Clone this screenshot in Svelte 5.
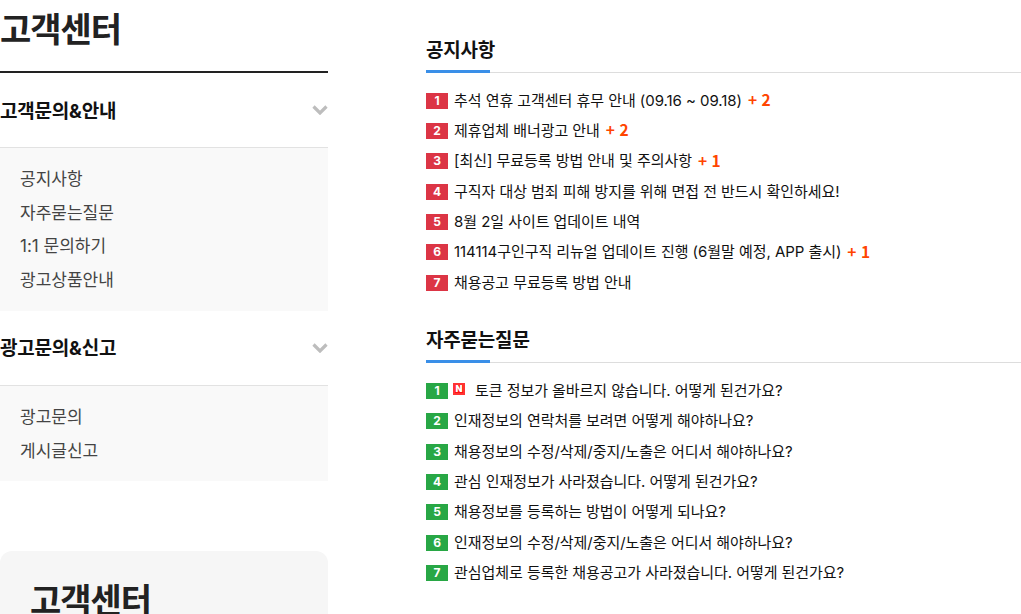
<script>
  const notices = [
    { text: '추석 연휴 고객센터 휴무 안내 (09.16 ~ 09.18)', plus: 2 },
    { text: '제휴업체 배너광고 안내', plus: 2 },
    { text: '[최신] 무료등록 방법 안내 및 주의사항', plus: 1 },
    { text: '구직자 대상 범죄 피해 방지를 위해 면접 전 반드시 확인하세요!' },
    { text: '8월 2일 사이트 업데이트 내역' },
    { text: '114114구인구직 리뉴얼 업데이트 진행 (6월말 예정, APP 출시)', plus: 1 },
    { text: '채용공고 무료등록 방법 안내' }
  ];
  const faqs = [
    { text: '토큰 정보가 올바르지 않습니다. 어떻게 된건가요?', isNew: true },
    { text: '인재정보의 연락처를 보려면 어떻게 해야하나요?' },
    { text: '채용정보의 수정/삭제/중지/노출은 어디서 해야하나요?' },
    { text: '관심 인재정보가 사라졌습니다. 어떻게 된건가요?' },
    { text: '채용정보를 등록하는 방법이 어떻게 되나요?' },
    { text: '인재정보의 수정/삭제/중지/노출은 어디서 해야하나요?' },
    { text: '관심업체로 등록한 채용공고가 사라졌습니다. 어떻게 된건가요?' }
  ];
  const menus = [
    { title: '고객문의&안내', items: ['공지사항', '자주묻는질문', '1:1 문의하기', '광고상품안내'] },
    { title: '광고문의&신고', items: ['광고문의', '게시글신고'] }
  ];
</script>

<div class="page">
  <aside class="side">
    <h1 class="side-title">고객센터</h1>
    {#each menus as m}
      <div class="menu-head">
        <span>{m.title}</span>
        <svg class="chev" width="16" height="10" viewBox="0 0 16 10">
          <path d="M1.5 1.5 L8 8 L14.5 1.5" fill="none" stroke="#bdbdbd" stroke-width="3.2" />
        </svg>
      </div>
      <ul class="menu-list">
        {#each m.items as item}
          <li>{item}</li>
        {/each}
      </ul>
    {/each}
    <div class="side-card">
      <h2>고객센터</h2>
    </div>
  </aside>

  <main class="content">
    <section class="board">
      <h3 class="board-title">공지사항</h3>
      <ul class="rows">
        {#each notices as n, i}
          <li>
            <span class="num red">{i + 1}</span>
            <span>{n.text}</span>
            {#if n.plus}<b class="plus">+ {n.plus}</b>{/if}
          </li>
        {/each}
      </ul>
    </section>
    <section class="board">
      <h3 class="board-title">자주묻는질문</h3>
      <ul class="rows">
        {#each faqs as f, i}
          <li>
            <span class="num green">{i + 1}</span>
            {#if f.isNew}<span class="new">N</span>{/if}
            <span>{f.text}</span>
          </li>
        {/each}
      </ul>
    </section>
  </main>
</div>

<style>
  :global(body) {
    margin: 0;
    background: #fff;
  }
  .page {
    display: flex;
    height: 614px;
    overflow: hidden;
    font-family: Inter, "Noto Sans CJK KR", sans-serif;
    color: #222;
  }
  ul {
    list-style: none;
    margin: 0;
    padding: 0;
  }
  .side {
    width: 328px;
    flex: none;
  }
  .side-title {
    margin: 0;
    height: 71px;
    border-bottom: 2px solid #222;
    font-size: 34px;
    font-weight: 700;
    line-height: 60px;
    letter-spacing: -1px;
    color: #222;
  }
  .menu-head {
    display: flex;
    justify-content: space-between;
    align-items: center;
    height: 74px;
    border-bottom: 1px solid #e2e2e2;
    font-size: 19px;
    font-weight: 700;
    letter-spacing: -0.2px;
    color: #111;
  }
  .menu-head span {
    margin-bottom: 2px;
  }
  .chev {
    flex: none;
  }
  .menu-list {
    background: #f9f9f9;
    padding: 15px 20px 13px;
    font-size: 17px;
    line-height: 33.7px;
    color: #444;
  }
  .side-card {
    margin-top: 70px;
    height: 120px;
    padding: 26px 30px;
    box-sizing: border-box;
    background: #f6f6f6;
    border-radius: 12px;
  }
  .side-card h2 {
    margin: 0;
    font-size: 34px;
    font-weight: 700;
    line-height: 48px;
    letter-spacing: -1px;
    color: #222;
  }
  .content {
    flex: 1;
    margin-left: 98px;
    padding-top: 36px;
  }
  .board {
    margin-bottom: 30px;
  }
  .board-title {
    position: relative;
    margin: 0;
    height: 36px;
    border-bottom: 1px solid #ddd;
    font-size: 19px;
    font-weight: 700;
    line-height: 30px;
    letter-spacing: -0.2px;
    color: #111;
  }
  .board-title::after {
    content: "";
    position: absolute;
    left: 0;
    bottom: -1px;
    width: 64px;
    height: 3px;
    background: #3a8fe8;
  }
  .rows {
    padding-top: 11px;
  }
  .rows li {
    display: flex;
    align-items: center;
    height: 30.33px;
    font-size: 15px;
    letter-spacing: -0.05px;
    color: #111;
  }
  .num {
    flex: none;
    width: 22px;
    height: 16px;
    margin-top: 3px;
    margin-right: 6px;
    color: #fff;
    font-size: 12px;
    font-weight: 700;
    line-height: 16px;
    text-align: center;
  }
  .red {
    background: #dc3545;
  }
  .green {
    background: #28a745;
  }
  .new {
    flex: none;
    width: 12px;
    height: 12px;
    margin-left: -1px;
    margin-right: 10px;
    box-sizing: border-box;
    border: 2px solid #f33;
    background: #f11;
    color: #fff;
    font-size: 9px;
    font-weight: 900;
    line-height: 8px;
    text-align: center;
  }
  .plus {
    margin-left: 6px;
    color: #ff4500;
    font-family: "Noto Sans CJK KR", sans-serif;
    font-size: 15.5px;
    font-weight: 700;
    word-spacing: 1px;
  }
</style>
